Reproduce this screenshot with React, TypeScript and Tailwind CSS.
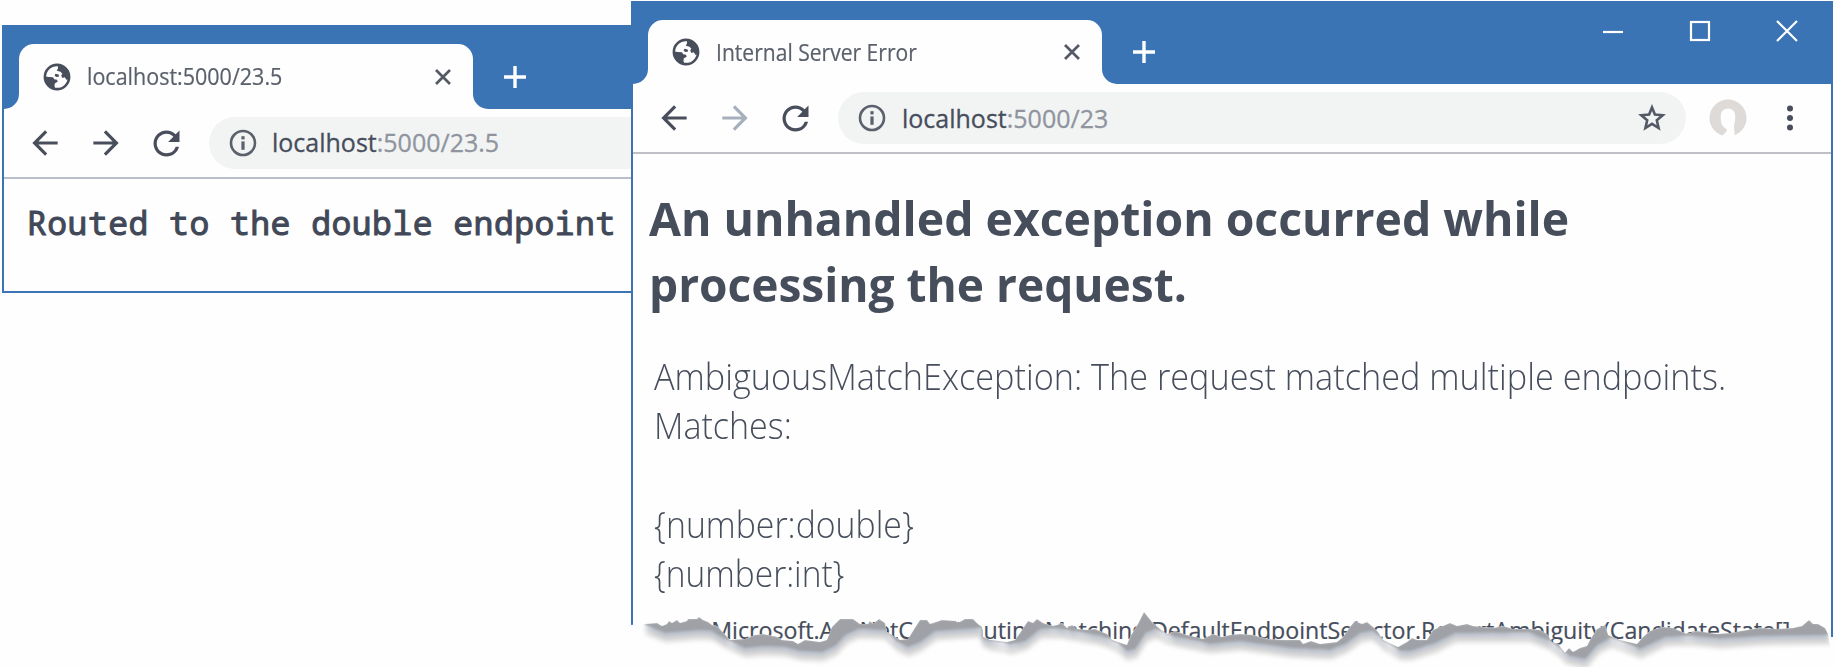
import type { ReactNode } from "react";
import { MdArrowBack, MdArrowForward, MdRefresh } from "react-icons/md";

const TEAR =
  "M645 624L657 623L662 626L667 624L669 621L672 623L677 620L680 623L687 621L688 619L697 619L699 617L703 620L708 622L712 625L717 626L730 640L745 639L755 635L763 634L777 637L782 640L793 641L798 644L805 640L820 642L827 640L832 627L840 619L853 619L860 624L868 624L870 621L873 624L879 619L885 623L887 632L900 640L908 639L920 620L927 620L930 624L942 620L956 621L958 623L965 619L973 619L978 624L982 627L983 637L990 640L1007 642L1015 640L1020 633L1028 621L1033 623L1037 619L1043 623L1052 626L1057 625L1062 623L1067 628L1072 625L1077 629L1087 630L1095 629L1102 632L1107 634L1112 640L1127 645L1130 637L1138 624L1144 612L1152 622L1160 629L1167 634L1175 631L1187 635L1203 639L1213 634L1222 637L1230 635L1240 634L1253 635L1267 639L1283 640L1300 640L1303 644L1311 641L1320 644L1337 642L1343 637L1350 627L1355 621L1362 624L1367 622L1373 627L1378 632L1383 640L1398 647L1407 642L1412 638L1417 640L1427 640L1433 630L1443 626L1450 623L1457 626L1467 624L1473 626L1483 627L1493 628L1503 626L1513 629L1530 629L1540 630L1547 634L1552 642L1558 644L1565 653L1569 648L1573 652L1580 648L1587 646L1590 640L1597 629L1605 625L1608 635L1620 640L1637 644L1643 637L1650 631L1662 627L1673 628L1687 634L1697 631L1717 634L1730 633L1747 630L1760 628L1777 629L1793 628L1802 626L1809 620L1813 624L1818 624L1825 628L1828 634";
const EDGE =
  "L1760 635L1720 638L1690 635L1665 636L1640 648L1620 640L1610 637L1597 644L1585 658L1570 655L1550 640L1530 632L1455 632L1435 642L1410 650L1400 650L1385 640L1372 630L1360 632L1345 643L1330 649L1290 647L1240 640L1210 643L1175 636L1155 628L1145 632L1135 648L1127 650L1115 640L1100 635L1060 628L1040 628L1025 640L1010 644L992 638L980 627L935 630L920 641L908 646L897 641L885 629L858 628L845 634L835 645L822 651L800 650L785 646L765 645L745 647L725 638L712 630L700 629L665 632L650 626Z";

function TornEdge() {
  return (
    <svg
      className="pointer-events-none absolute left-0 top-0"
      width="1834"
      height="667"
      viewBox="0 0 1834 667"
    >
      <defs>
        <clipPath id="below-tear">
          <path d={TEAR + "L1834 667L640 667L640 624Z"} />
        </clipPath>
        <filter id="soft" x="-5%" y="-50%" width="110%" height="200%">
          <feGaussianBlur stdDeviation="2.2" />
        </filter>
        <filter id="softer" x="-5%" y="-50%" width="110%" height="200%">
          <feGaussianBlur stdDeviation="0.9" />
        </filter>
      </defs>
      <path d={TEAR + "L1829 637L1834 637L1834 667L630 667L630 625Z"} fill="#fefefe" />
      <g clipPath="url(#below-tear)">
        <path d={TEAR + EDGE} transform="translate(1 9)" fill="#dcdad9" stroke="#dcdad9" strokeWidth="3" filter="url(#soft)" />
        <path d={TEAR + EDGE} transform="translate(0 4)" fill="#b9c0cb" stroke="#b9c0cb" strokeWidth="2" filter="url(#soft)" />
        <path d={TEAR + EDGE} fill="#9fa1a6" stroke="#9fa1a6" strokeWidth="1.5" filter="url(#softer)" />
      </g>
    </svg>
  );
}

function GlobeIcon() {
  return (
    <svg viewBox="0 0 24 24" className="size-[28px] shrink-0 text-[#484e5b]">
      <circle cx="12" cy="12" r="10.4" fill="none" stroke="currentColor" strokeWidth="2.2" />
      <path
        fill="currentColor"
        d="M13 2L17 3.2L21 7.5L22 13L20.5 14.8L18.6 12.2L16.6 12.8L15.6 10.8L16.6 9.2L15 7.4L11.8 6.6L12.8 4.8Z"
      />
      <path
        fill="currentColor"
        d="M2 11.6L5 12L8.6 12.2L9.6 14L12 14.4L12.6 16L10.2 17.4L9.8 19.6L10.6 22L6 20.8L3 17Z"
      />
      <path fill="currentColor" d="M10.6 9.2L13.4 9.8L13.8 11.6L11.4 12L10 11Z" />
    </svg>
  );
}

function InfoIcon() {
  return (
    <svg viewBox="0 0 28 28" className="size-[28px] shrink-0 text-[#5b616c]">
      <circle cx="14" cy="14" r="12" fill="none" stroke="currentColor" strokeWidth="2.6" />
      <rect x="12.4" y="12.4" width="3.2" height="8.4" fill="currentColor" />
      <rect x="12.4" y="7.2" width="3.2" height="3.2" fill="currentColor" />
    </svg>
  );
}

function StarIcon() {
  return (
    <svg viewBox="0 0 28 28" className="size-[28px] shrink-0" fill="none" stroke="#535965" strokeWidth="2.6">
      <path d="M14 3.4L16.9 10.6L24.7 11.2L18.8 16.3L20.6 24L14 19.9L7.4 24L9.2 16.3L3.3 11.2L11.1 10.6Z" />
    </svg>
  );
}

function CloseIcon() {
  return (
    <svg viewBox="0 0 16 16" className="size-[16px] shrink-0" stroke="#535965" strokeWidth="2.7">
      <path d="M1 1L15 15M15 1L1 15" />
    </svg>
  );
}

function PlusIcon() {
  return (
    <svg viewBox="0 0 22 22" className="size-[22px] shrink-0" stroke="#fff" strokeWidth="3.4">
      <path d="M11 0V22M0 11H22" />
    </svg>
  );
}

function Flare({ side }: { side: "left" | "right" }) {
  return (
    <div className="w-[15px] shrink-0 self-end bg-[#fefefe]">
      <div
        className={
          side === "left"
            ? "h-[15px] rounded-br-[15px] bg-[#3b74b5]"
            : "h-[15px] rounded-bl-[15px] bg-[#3b74b5]"
        }
      />
    </div>
  );
}

function Tab({ children }: { children: ReactNode }) {
  return (
    <div className="flex h-full">
      <Flare side="left" />
      <div className="flex w-[454px] items-center rounded-t-[15px] bg-[#fefefe] pl-[24px] pr-[22px]">
        <GlobeIcon />
        <span className="ml-[16px] flex-1 whitespace-nowrap">{children}</span>
        <CloseIcon />
      </div>
      <Flare side="right" />
    </div>
  );
}

function WindowButtons() {
  return (
    <svg viewBox="0 0 196 22" className="h-[22px] w-[196px]" fill="none" stroke="#fff" strokeWidth="2.2">
      <path d="M1 12H21" />
      <rect x="89" y="2" width="18" height="18" />
      <path d="M175 1L195 21M195 1L175 21" />
    </svg>
  );
}

function AvatarIcon() {
  return (
    <svg viewBox="0 0 38 38" className="size-[38px]">
      <circle cx="19" cy="19" r="18.5" fill="#dddad7" />
      <path
        fill="#fefefe"
        d="M19 9.5C24 9.5 26.5 13 26.3 18.5C26.1 23 24.8 25.5 25 29L26 38H12L16.5 33.5C18.5 31.5 18 29.5 15.8 29C12.3 26.5 11.7 22.5 11.7 18.5C11.5 13 14 9.5 19 9.5Z"
      />
    </svg>
  );
}

export default function App() {
  return (
    <main className="relative h-[667px] w-[1834px] overflow-hidden bg-[#fefefe] font-['Open_Sans',sans-serif] text-[#464d5b]">
      <section className="absolute left-[2px] top-[25px] h-[268px] w-[640px] border-2 border-t-0 border-[#3b74b5] bg-[#fefefe]">
        <header className="flex h-[84px] items-stretch bg-[#3b74b5] pt-[19px]">
          <Tab>
            <span className="inline-block origin-left scale-x-[0.935] text-[23px] text-[#5b616c] [-webkit-text-stroke:0.2px_#5b616c]">
              localhost:5000/23.5
            </span>
          </Tab>
          <div className="ml-[16px] flex items-center">
            <PlusIcon />
          </div>
        </header>
        <nav className="flex h-[70px] items-center border-b-2 border-[#b8bfca] pl-[22px]">
          <MdArrowBack className="size-[38px] text-[#484e5b]" />
          <MdArrowForward className="ml-[23px] size-[38px] text-[#484e5b]" />
          <MdRefresh className="ml-[22px] size-[39px] text-[#484e5b]" />
          <div className="ml-[23px] flex h-[52px] flex-1 items-center rounded-l-full bg-[#f2f4f4] pl-[20px] text-[25px]">
            <InfoIcon />
            <span className="ml-[15px] whitespace-nowrap [-webkit-text-stroke:0.3px]">
              localhost<span className="text-[#8f949e]">:5000/23.5</span>
            </span>
          </div>
        </nav>
        <p className="whitespace-nowrap pl-[23px] pt-[24px] font-['Noto_Sans_Mono','DejaVu_Sans_Mono',monospace] text-[33px] leading-[40px] tracking-[0.5px] text-[#414857] [-webkit-text-stroke:1px_#414857]">
          Routed to the double endpoint
        </p>
      </section>

      <section className="absolute left-[631px] top-[1px] h-[636px] w-[1202px] border-x-2 border-[#3b74b5] bg-[#fefefe]">
        <header className="flex h-[83px] items-stretch bg-[#3b74b5] pt-[19px]">
          <Tab>
            <span className="inline-block origin-left scale-x-[0.916] text-[23px] text-[#5b616c] [-webkit-text-stroke:0.2px_#5b616c]">
              Internal Server Error
            </span>
          </Tab>
          <div className="ml-[16px] flex flex-1 items-center">
            <PlusIcon />
          </div>
          <div className="mr-[33px]">
            <WindowButtons />
          </div>
        </header>
        <nav className="flex h-[70px] items-center border-b-2 border-[#bdbfc5] pl-[22px] pr-[28px]">
          <MdArrowBack className="size-[38px] text-[#484e5b]" />
          <MdArrowForward className="ml-[23px] size-[38px] text-[#a5afbe]" />
          <MdRefresh className="ml-[22px] size-[39px] text-[#484e5b]" />
          <div className="ml-[23px] flex h-[52px] w-[848px] items-center rounded-full bg-[#f2f4f4] pl-[20px] pr-[20px] text-[25px]">
            <InfoIcon />
            <span className="ml-[16px] flex-1 whitespace-nowrap pt-px [-webkit-text-stroke:0.3px]">
              localhost<span className="text-[#8f949e]">:5000/23</span>
            </span>
            <StarIcon />
          </div>
          <div className="ml-[23px]">
            <AvatarIcon />
          </div>
          <svg viewBox="0 0 6 26" className="ml-[40px] h-[26px] w-[6px]" fill="#484e5b">
            <circle cx="3" cy="3.5" r="3" />
            <circle cx="3" cy="13" r="3" />
            <circle cx="3" cy="22.5" r="3" />
          </svg>
        </nav>
        <div className="whitespace-nowrap pl-[16px] pt-[31px]">
          <h1 className="text-[47px] font-bold leading-[66.4px]">
            <span className="inline-block origin-left scale-x-[0.986]">
              An unhandled exception occurred while
            </span>
            <br />
            <span className="inline-block origin-left scale-x-[0.98]">processing the request.</span>
          </h1>
          <div className="pl-[5px] pt-[33px] text-[37px] font-light leading-[49.3px]">
            <p className="origin-left scale-x-[0.926]">
              AmbiguousMatchException: The request matched multiple endpoints.
            </p>
            <p className="origin-left scale-x-[0.92]">Matches:</p>
            <p className="origin-left scale-x-[0.914] pt-[49.3px]">{"{number:double}"}</p>
            <p className="origin-left scale-x-[0.904]">{"{number:int}"}</p>
          </div>
          <p className="pl-[35px] pt-[18px] text-[23.2px] leading-[30px] [-webkit-text-stroke:0.2px]">
            at Microsoft.AspNetCore.Routing.Matching.DefaultEndpointSelector.ReportAmbiguity(CandidateState[]
          </p>
        </div>
      </section>
      <TornEdge />
    </main>
  );
}
